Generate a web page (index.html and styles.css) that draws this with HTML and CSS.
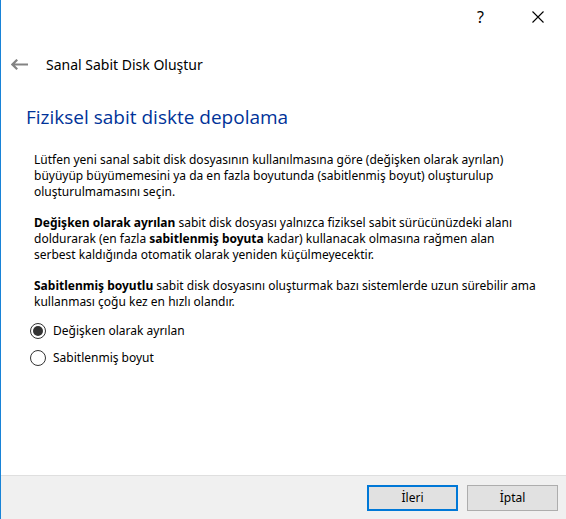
FILE: index.html
```html
<!DOCTYPE html>
<html lang="tr">
<head>
<meta charset="utf-8">
<title>Sanal Sabit Disk Oluştur</title>
<link rel="stylesheet" href="styles.css">
</head>
<body>
<form class="wizard">
  <div class="titlebar">
    <button class="caption-button" type="button" aria-label="Yardım">?</button>
    <button class="caption-button" type="button" aria-label="Kapat">
      <svg width="12" height="12" viewBox="0 0 12 12"><path d="M0.5 0.5L11.5 11.5M11.5 0.5L0.5 11.5" fill="none" stroke="#000" stroke-width="1.1"/></svg>
    </button>
  </div>
  <header class="header">
    <button class="back" type="button" aria-label="Geri">
      <svg width="17" height="13" viewBox="0 0 17 13"><path d="M17 5.5H2M6.2 0.7L1.4 5.5L6.2 10.3" fill="none" stroke="#838383" stroke-width="2.2"/></svg>
    </button>
    <span class="title">Sanal Sabit Disk Oluştur</span>
  </header>
  <main class="content">
    <h1 class="heading">Fiziksel sabit diskte depolama</h1>
    <div class="description">
      <p>Lütfen yeni sanal sabit disk dosyasının kullanılmasına göre (değişken olarak ayrılan)<br>büyüyüp büyümemesini ya da en fazla boyutunda (sabitlenmiş boyut) oluşturulup<br>oluşturulmamasını seçin.</p>
      <p><b>Değişken olarak ayrılan</b> sabit disk dosyası yalnızca fiziksel sabit sürücünüzdeki alanı<br>doldurarak (en fazla <b>sabitlenmiş boyuta</b> kadar) kullanacak olmasına rağmen alan<br>serbest kaldığında otomatik olarak yeniden küçülmeyecektir.</p>
      <p><b>Sabitlenmiş boyutlu</b> sabit disk dosyasını oluşturmak bazı sistemlerde uzun sürebilir ama<br>kullanması çoğu kez en hızlı olandır.</p>
    </div>
    <div class="options">
      <label class="option"><input type="radio" name="storage" checked>Değişken olarak ayrılan</label>
      <label class="option"><input type="radio" name="storage">Sabitlenmiş boyut</label>
    </div>
  </main>
  <footer class="footer">
    <button class="button primary" type="submit">İleri</button>
    <button class="button" type="button">İptal</button>
  </footer>
</form>
</body>
</html>
```
FILE: styles.css
```css
* {
  box-sizing: border-box;
}

body {
  margin: 0;
  background: #fff;
  color: #000;
  font: 12px/16px "Noto Sans", "Open Sans", sans-serif;
}

button {
  padding: 0;
  color: inherit;
  font: inherit;
}

.wizard {
  display: flex;
  flex-direction: column;
  min-height: 100vh;
  border-left: 1px solid #1883d7;
}

.titlebar {
  display: flex;
  justify-content: flex-end;
  height: 34px;
}

.caption-button {
  display: flex;
  align-items: center;
  justify-content: center;
  width: 57px;
  border: 0;
  background: none;
  font-size: 16px;
}

.header {
  display: flex;
  align-items: center;
  gap: 18px;
  height: 62px;
  padding-left: 10px;
}

.back {
  display: flex;
  border: 0;
  background: none;
}

.title {
  font-size: 14px;
  line-height: 20px;
}

.content {
  flex: 1;
  padding: 8px 16px 16px 25px;
}

.heading {
  margin: 0;
  color: #003399;
  font-family: "Open Sans", "Noto Sans", sans-serif;
  font-size: 19px;
  font-weight: 400;
  line-height: 26px;
}

.description {
  margin: 22px 0 0 8px;
  white-space: nowrap;
}

.description p {
  margin: 0 0 15px;
}

.options {
  display: flex;
  flex-direction: column;
  align-items: flex-start;
  gap: 9px;
  margin: -3px 0 0 4px;
}

.option {
  display: flex;
  align-items: center;
  gap: 7px;
  height: 18px;
}

.option input {
  display: grid;
  place-items: center;
  width: 16px;
  height: 16px;
  margin: 0;
  border: 1px solid #333;
  border-radius: 50%;
  background: #fff;
  appearance: none;
}

.option input:checked::before {
  width: 10px;
  height: 10px;
  border-radius: 50%;
  background: #333;
  content: "";
}

.footer {
  display: flex;
  justify-content: flex-end;
  gap: 9px;
  padding: 9px 8px 8px;
  border-top: 1px solid #dfdfdf;
  background: #f0f0f0;
}

.button {
  width: 91px;
  height: 26px;
  border: 1px solid #adadad;
  background: #e1e1e1;
}

.primary {
  border: 2px solid #0078d7;
}
```
